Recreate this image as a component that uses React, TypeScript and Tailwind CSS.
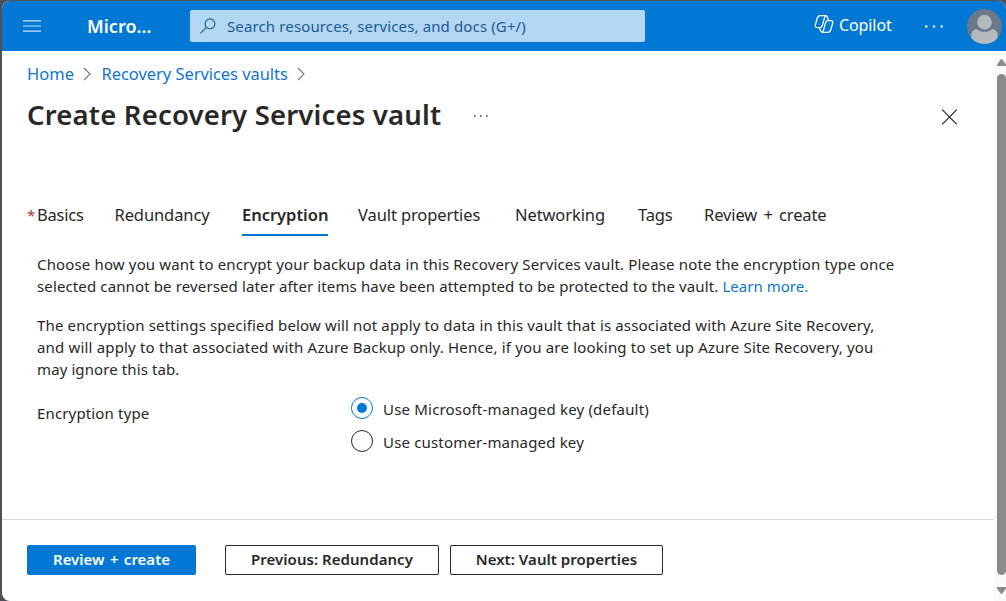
import React from "react";

const tabs = [
  { label: "Redundancy", cls: "ml-[30.500px] w-[96px] tracking-[-0.1px]" },
  { label: "Encryption", cls: "ml-[31.500px] w-[86px] font-semibold border-b-[#0078d4] tracking-[-0.020px]" },
  { label: "Vault properties", cls: "ml-[30px] w-[123px] tracking-[-0.1px]" },
  { label: "Networking", cls: "ml-[34px] w-[90px] tracking-[-0.1px]" },
  { label: "Tags", cls: "ml-[33px] w-[35px] tracking-[-0.2px]" },
  { label: "Review + create", cls: "ml-[31px] w-[123px] tracking-[-0.1px] [word-spacing:2px]" },
];

function Chevron({ className }: { className: string }) {
  return (
    <svg className={className} width="8" height="14" viewBox="0 0 8 14" fill="none" stroke="#767676" strokeWidth="1.1">
      <path d="M1 1L7 7L1 13" />
    </svg>
  );
}

function CopilotHalf({ transform }: { transform?: string }) {
  return (
    <g transform={transform}>
      <path d="M6.200 1.700H11.500C12.800 1.700 13.300 2.400 13.700 3.700L14.400 6.200" />
      <path d="M6.200 1.700C4.500 1.700 3.700 2.500 3.200 4.200L1.400 10.500C.9 12.500 1.600 13.500 3.300 13.500H6C7.200 13.500 7.800 13 8.200 11.800L10.600 3.500C11 2.200 11.500 1.700 12.200 1.700" />
    </g>
  );
}

function Header() {
  return (
    <header className="flex h-[50px] shrink-0 items-center bg-[#0078d4] text-white">
      <svg className="ml-[21px]" width="18" height="12" viewBox="0 0 18 12" stroke="#cfe4f7" strokeWidth="1.2">
        <path d="M0 .9H18M0 6H18M0 11.1H18" />
      </svg>
      <div className="ml-[46px] w-[103px] whitespace-nowrap text-[18px] font-semibold leading-6 tracking-[0.020px]">Micro...</div>
      <div className="flex h-8 w-[455px] items-center rounded-[2px] bg-[#b3d6f2] text-[#1c5a92]">
        <svg className="ml-[10px]" width="16" height="16" viewBox="0 0 16 16" fill="none" stroke="currentColor" strokeWidth="1.1">
          <circle cx="10" cy="5.8" r="4.9" />
          <path d="M6.4 9.4L.4 15.3" />
        </svg>
        <span className="ml-[11px] whitespace-nowrap text-[15px] leading-6 tracking-[0.130px]">Search resources, services, and docs (G+/)</span>
      </div>
      <svg className="ml-[169px] -mt-[4px]" width="20" height="20" viewBox="0 0 20 20" fill="none" stroke="white" strokeWidth="1.25" strokeLinejoin="round">
        <CopilotHalf />
        <CopilotHalf transform="rotate(180 10 10)" />
      </svg>
      <span className="-mt-[2px] ml-[5px] w-[53px] whitespace-nowrap text-[16px] leading-6 tracking-[-0.1px]">Copilot</span>
      <svg className="ml-[33px]" width="18" height="3" viewBox="0 0 18 3" fill="white">
        <circle cx="1.300" cy="1.500" r="1.200" /><circle cx="9" cy="1.500" r="1.200" /><circle cx="16.700" cy="1.500" r="1.200" />
      </svg>
      <svg className="ml-[24px] mt-px" width="35" height="35" viewBox="0 0 35 35">
        <circle cx="17.500" cy="17.500" r="17.500" fill="#69798a" />
        <path d="M4.300 29V26.500C4.300 22.500 6.500 20.200 10 20.200C12 21.800 14.500 23 17.500 23S23 21.800 25 20.200C28.500 20.200 30.700 22.500 30.700 26.500V29A17.500 17.500 0 0 1 4.300 29Z" fill="#b5babf" />
        <circle cx="17.500" cy="13.200" r="8" fill="#b5babf" stroke="#69798a" strokeWidth="1.300" />
      </svg>
    </header>
  );
}

function Scrollbar() {
  return (
    <div className="flex w-[10px] shrink-0 flex-col items-end bg-[#fafafa]">
      <svg className="mt-[8px]" width="9" height="7" viewBox="0 0 9 7" fill="#8a8a8a"><path d="M0 7V5.500L3.500.7Q4.500-.5 5.500.7L9 5.500V7Z" /></svg>
      <div className="mt-[8px] h-[501px] w-[9px] rounded-full bg-[#8a8a8a]" />
      <svg className="mt-[12px]" width="9" height="7" viewBox="0 0 9 7" fill="#8a8a8a"><path d="M0 0V1.500L3.500 6.300Q4.500 7.500 5.500 6.300L9 1.500V0Z" /></svg>
    </div>
  );
}

export default function App() {
  return (
    <div className="h-[601px] w-[1006px] overflow-hidden bg-[#505156] pl-[2px] pt-[1px] font-['Noto_Sans','Open_Sans',sans-serif] text-[#292827]">
      <div className="flex h-[600px] w-[1004px] flex-col overflow-hidden rounded-l-[8px] rounded-tr-[8px] bg-white">
        <Header />
        <div className="flex min-h-0 flex-1">
          <main className="flex w-[992px] shrink-0 flex-col">
            <nav className="mt-[11px] flex h-[24px] items-center pl-[25px] text-[16.500px] leading-6 text-[#0f75cf]">
              <a className="w-[47px] whitespace-nowrap">Home</a>
              <Chevron className="ml-[9px]" />
              <a className="ml-[10.500px] w-[186.500px] whitespace-nowrap tracking-[-0.05px]">Recovery Services vaults</a>
              <Chevron className="ml-[9px]" />
            </nav>
            <div className="mt-[9px] flex h-[40px] items-center pl-[25px]">
              <h1 className="w-[414px] whitespace-nowrap text-[27.500px] font-semibold leading-10 tracking-[0.180px]">Create Recovery Services vault</h1>
              <svg className="ml-[33px] mt-[2px]" width="14" height="2" viewBox="0 0 14 2" fill="#333"><path d="M0 .3H1.500V1.800H0ZM6 .3H7.500V1.800H6ZM12 .3H13.500V1.800H12Z" /></svg>
              <svg className="ml-[453px] mt-[3px]" width="17" height="16" viewBox="0 0 17 16" stroke="#292827" strokeWidth="1.200"><path d="M1.200.7L15.800 15.300M15.800.7L1.200 15.300" /></svg>
            </div>
            <div className="mt-[67px] flex h-[34px] pl-[25px] text-[16.500px] leading-[26px]">
              <span className="w-[10px] text-[15px] text-[#b3362f]">*</span>
              <span className="w-[47px] whitespace-nowrap tracking-[-0.2px]">Basics</span>
              {tabs.map((t) => (
                <div key={t.label} className={"whitespace-nowrap border-b-[2.500px] border-transparent " + t.cls}>{t.label}</div>
              ))}
            </div>
            <section className="mt-[17px] pl-[35px] text-[15px] leading-[22px] tracking-[0.150px]">
              <p className="whitespace-nowrap">
                <span>Choose how you want to encrypt your backup data in this Recovery Services vault. Please note the encryption type once</span><br />
                <span className="tracking-[0.128px]">selected cannot be reversed later after items have been attempted to be protected to the vault. </span><a className="tracking-[0.020px] text-[#0f75cf]">Learn more.</a>
              </p>
              <p className="mt-[17px] whitespace-nowrap">
                <span>The encryption settings specified below will not apply to data in this vault that is associated with Azure Site Recovery,</span><br />
                <span className="tracking-[0.175px]">and will apply to that associated with Azure Backup only. Hence, if you are looking to set up Azure Site Recovery, you</span><br />
                <span className="tracking-[0.100px]">may ignore this tab.</span>
              </p>
              <div className="mt-[16px] flex">
                <div className="mt-[6px] w-[314px]">Encryption type</div>
                <div className="mt-px flex flex-col gap-[11px]">
                  <label className="flex h-[22px] items-center gap-[10px]">
                    <span className="flex size-[22px] items-center justify-center rounded-full border border-[#0078d4]"><span className="size-[10px] rounded-full bg-[#0078d4]" /></span>
                    <span className="mt-[2px] tracking-[0.190px]">Use Microsoft-managed key (default)</span>
                  </label>
                  <label className="flex h-[22px] items-center gap-[10px]">
                    <span className="size-[22px] rounded-full border border-[#292827]" />
                    <span className="mt-[2px] tracking-[0.170px]">Use customer-managed key</span>
                  </label>
                </div>
              </div>
            </section>
            <footer className="mt-auto flex h-[82px] border-t border-[#dcdcdc] pl-[25px] pt-[25px] text-[15px] font-semibold leading-5">
              <button className="h-[30px] w-[169px] whitespace-nowrap rounded-[2px] bg-[#0078d4] pb-[2px] text-white [word-spacing:1.500px]">Review + create</button>
              <button className="ml-[29px] h-[30px] w-[214px] whitespace-nowrap rounded-[2px] border border-[#292827] pb-[2px] tracking-[0.040px]">Previous: Redundancy</button>
              <button className="ml-[11px] h-[30px] w-[213px] whitespace-nowrap rounded-[2px] border border-[#292827] pb-[2px] tracking-[0.040px]">Next: Vault properties</button>
            </footer>
          </main>
          <div className="flex w-[12px] justify-end bg-[#fafafa]"><Scrollbar /></div>
        </div>
      </div>
    </div>
  );
}
